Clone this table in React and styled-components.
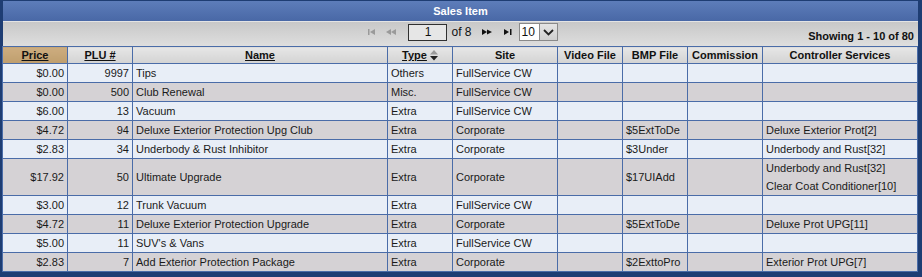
import React from 'react';
import styled, { createGlobalStyle } from 'styled-components';

const GlobalStyle = createGlobalStyle`
  html, body {
    margin: 0;
    padding: 0;
    background: #ffffff;
  }
  body {
    font-family: 'Liberation Sans', Arial, sans-serif;
  }
`;

const Frame = styled.div`
  width: 922px;
  height: 277px;
  box-sizing: border-box;
  background: #1e3d73;
  border-top: 1px solid #1e3d73;
  padding: 0 4px 4px 2px;
  display: flex;
  flex-direction: column;
  font-family: 'Liberation Sans', Arial, sans-serif;
  font-size: 11px;
`;

const TitleBar = styled.div`
  height: 20px;
  line-height: 20px;
  text-align: center;
  color: #ffffff;
  font-weight: bold;
  background: linear-gradient(#5d7dba, #4968a6);
  margin-left: 1px;
`;

const Toolbar = styled.div`
  height: 25px;
  box-sizing: border-box;
  display: grid;
  grid-template-columns: 1fr auto 1fr;
  background: linear-gradient(#c8c8c8, #dedede);
  margin-left: 1px;
  border-top: 1px solid #e4e4e4;
`;

const Pager = styled.div`
  grid-column: 2;
  display: flex;
  align-items: center;
  height: 18px;
  margin-top: 1px;
  margin-left: 4px;
`;

const PagerIcon = styled.svg`
  width: 11px;
  height: 8px;
  margin-right: ${(p) => p.$gap}px;
`;

const PageInput = styled.div`
  width: 37px;
  height: 15px;
  line-height: 15px;
  border: 1px solid #303030;
  background: #e6e6e6;
  text-align: center;
  color: #111;
  font-size: 12px;
`;

const OfLabel = styled.span`
  font-size: 12px;
  color: #111;
  margin: 0 10px 0 4px;
`;

const SizeSelect = styled.div`
  display: flex;
  height: 16px;
  border: 1px solid #8a8a8a;
  background: #ffffff;
  margin-left: 5px;
`;

const SelectValue = styled.span`
  width: 17px;
  padding-left: 2px;
  line-height: 16px;
  font-size: 12px;
  color: #111;
`;

const SelectButton = styled.span`
  width: 17px;
  display: flex;
  align-items: center;
  justify-content: center;
  background: linear-gradient(#e4e4e4, #cfcfcf);
  border-left: 1px solid #8a8a8a;
`;

const Showing = styled.div`
  grid-column: 3;
  justify-self: end;
  align-self: end;
  padding: 0 4px 4px 0;
  font-weight: bold;
  color: #111;
`;

const Grid = styled.table`
  width: 916px;
  table-layout: fixed;
  border-collapse: collapse;
  border: 1px solid #4a6ca8;
`;

const HeadCell = styled.th`
  height: 16px;
  padding: 0;
  border: 1px solid #4a6ca8;
  background: ${(p) =>
    p.$active
      ? 'linear-gradient(#cdad80, #bf9e6d)'
      : 'linear-gradient(#e6e6e6, #d3d3d3)'};
  color: #111;
  font-weight: bold;
  font-size: 11px;
  text-align: center;
  white-space: nowrap;
`;

const SortLink = styled.span`
  text-decoration: underline;
`;

const SortIcon = styled.svg`
  width: 8px;
  height: 11px;
  margin-left: 3px;
  vertical-align: -2px;
`;

const Row = styled.tr`
  background: ${(p) => (p.$alt ? '#d5d2d5' : '#e8eef7')};
`;

const Cell = styled.td`
  padding: 0 3px;
  height: 18px;
  line-height: 18px;
  border: 1px solid #4a6ca8;
  color: #1a1a1a;
  text-align: ${(p) => p.$align || 'left'};
  white-space: nowrap;
  overflow: hidden;
  vertical-align: middle;
`;

const Line = styled.div`
  height: 18px;
`;

const columns = [
  { label: 'Price', width: 65, sort: true, active: true },
  { label: 'PLU #', width: 65, sort: true },
  { label: 'Name', width: 255, sort: true },
  { label: 'Type', width: 65, sort: true, icon: true },
  { label: 'Site', width: 105 },
  { label: 'Video File', width: 65 },
  { label: 'BMP File', width: 65 },
  { label: 'Commission', width: 75 },
  { label: 'Controller Services', width: 155 },
];

const rows = [
  ['$0.00', '9997', 'Tips', 'Others', 'FullService CW', '', '', '', []],
  ['$0.00', '500', 'Club Renewal', 'Misc.', 'FullService CW', '', '', '', []],
  ['$6.00', '13', 'Vacuum', 'Extra', 'FullService CW', '', '', '', []],
  ['$4.72', '94', 'Deluxe Exterior Protection Upg Club', 'Extra', 'Corporate', '', '$5ExtToDe', '', ['Deluxe Exterior Prot[2]']],
  ['$2.83', '34', 'Underbody & Rust Inhibitor', 'Extra', 'Corporate', '', '$3Under', '', ['Underbody and Rust[32]']],
  ['$17.92', '50', 'Ultimate Upgrade', 'Extra', 'Corporate', '', '$17UIAdd', '', ['Underbody and Rust[32]', 'Clear Coat Conditioner[10]']],
  ['$3.00', '12', 'Trunk Vacuum', 'Extra', 'FullService CW', '', '', '', []],
  ['$4.72', '11', 'Deluxe Exterior Protection Upgrade', 'Extra', 'Corporate', '', '$5ExtToDe', '', ['Deluxe Prot UPG[11]']],
  ['$5.00', '11', "SUV's & Vans", 'Extra', 'FullService CW', '', '', '', []],
  ['$2.83', '7', 'Add Exterior Protection Package', 'Extra', 'Corporate', '', '$2ExttoPro', '', ['Exterior Prot UPG[7]']],
];

function FirstIcon() {
  return (
    <PagerIcon viewBox="0 0 11 8" $gap={8}>
      <rect x="1" y="1" width="1.5" height="6" fill="#9a9a9a" />
      <polygon points="3,4 8,1 8,7" fill="#9a9a9a" />
    </PagerIcon>
  );
}

function PrevIcon() {
  return (
    <PagerIcon viewBox="0 0 11 8" $gap={11}>
      <polygon points="0,4 5,1 5,7" fill="#9a9a9a" />
      <polygon points="5,4 10,1 10,7" fill="#9a9a9a" />
    </PagerIcon>
  );
}

function NextIcon() {
  return (
    <PagerIcon viewBox="0 0 11 8" $gap={10}>
      <polygon points="0,1 5,4 0,7" fill="#111" />
      <polygon points="5,1.5 10,4 5,6.5" fill="#111" />
    </PagerIcon>
  );
}

function LastIcon() {
  return (
    <PagerIcon viewBox="0 0 11 8" $gap={0}>
      <polygon points="1,1 6,4 1,7" fill="#111" />
      <rect x="7" y="1" width="1.5" height="6" fill="#111" />
    </PagerIcon>
  );
}

function Chevron() {
  return (
    <svg width="11" height="7" viewBox="0 0 11 7">
      <polyline points="1,1 5.5,5.5 10,1" fill="none" stroke="#222" strokeWidth="1.8" />
    </svg>
  );
}

function SortArrows() {
  return (
    <SortIcon viewBox="0 0 8 11">
      <polygon points="4,0 8,4.5 0,4.5" fill="#9a9a9a" />
      <polygon points="0,6 8,6 4,10.5" fill="#222" />
    </SortIcon>
  );
}

export default function App() {
  return (
    <>
      <GlobalStyle />
      <Frame>
        <TitleBar>Sales Item</TitleBar>
        <Toolbar>
          <Pager>
            <FirstIcon />
            <PrevIcon />
            <PageInput>1</PageInput>
            <OfLabel>of 8</OfLabel>
            <NextIcon />
            <LastIcon />
            <SizeSelect>
              <SelectValue>10</SelectValue>
              <SelectButton>
                <Chevron />
              </SelectButton>
            </SizeSelect>
          </Pager>
          <Showing>Showing 1 - 10 of 80</Showing>
        </Toolbar>
        <Grid>
          <colgroup>
            {columns.map((c) => (
              <col key={c.label} style={{ width: c.width }} />
            ))}
          </colgroup>
          <thead>
            <tr>
              {columns.map((c) => (
                <HeadCell key={c.label} $active={c.active}>
                  {c.sort ? <SortLink>{c.label}</SortLink> : c.label}
                  {c.icon && <SortArrows />}
                </HeadCell>
              ))}
            </tr>
          </thead>
          <tbody>
            {rows.map((r, i) => (
              <Row key={i} $alt={i % 2 === 1}>
                <Cell $align="right">{r[0]}</Cell>
                <Cell $align="right">{r[1]}</Cell>
                <Cell>{r[2]}</Cell>
                <Cell>{r[3]}</Cell>
                <Cell>{r[4]}</Cell>
                <Cell>{r[5]}</Cell>
                <Cell>{r[6]}</Cell>
                <Cell>{r[7]}</Cell>
                <Cell>
                  {r[8].map((s) => (
                    <Line key={s}>{s}</Line>
                  ))}
                </Cell>
              </Row>
            ))}
          </tbody>
        </Grid>
      </Frame>
    </>
  );
}
